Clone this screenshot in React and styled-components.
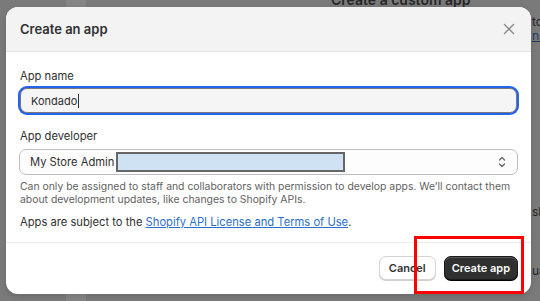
import styled, { createGlobalStyle } from "styled-components";

const GlobalStyle = createGlobalStyle`
  html, body {
    margin: 0;
    padding: 0;
    background: #7a7a7a;
  }
  body {
    font-family: Inter, "Noto Sans", sans-serif;
    -webkit-font-smoothing: antialiased;
  }
`;

const Screen = styled.div`
  position: relative;
  width: 540px;
  height: 301px;
  overflow: hidden;
  background: #7a7a7a;
`;

const PageBehind = styled.div`
  display: grid;
  grid-template-columns: 66px 20px 1fr;
  height: 100%;
`;

const SideStrip = styled.div`
  grid-column: 2;
  background: #858585;
`;

const BehindMain = styled.div`
  grid-column: 3;
  position: relative;
`;

const BehindTitle = styled.div`
  position: absolute;
  left: 245px;
  top: -9px;
  font-size: 14px;
  font-weight: 600;
  color: #262626;
  white-space: nowrap;
`;

const BehindWord = styled.span`
  position: absolute;
  left: 446px;
  top: ${({ $top }) => $top}px;
  font-size: 12px;
  text-decoration: ${({ $link }) => ($link ? "underline" : "none")};
  color: ${({ $link }) => ($link ? "#1f3a66" : "#262626")};
`;

const Modal = styled.div`
  position: absolute;
  left: 6px;
  top: 7px;
  width: 525px;
  height: 287px;
  background: #fff;
  border-radius: 12px;
  overflow: hidden;
  display: flex;
  flex-direction: column;
  box-shadow: 0 2px 6px rgba(0, 0, 0, 0.15);
`;

const Header = styled.div`
  height: 45px;
  box-sizing: border-box;
  display: flex;
  align-items: center;
  justify-content: space-between;
  padding: 0 16px 0 14px;
  background: #f3f3f3;
  border-bottom: 1px solid #e4e4e4;
`;

const Title = styled.h2`
  margin: 0;
  font-size: 13px;
  font-weight: 600;
  color: #303030;
`;

const CloseButton = styled.button`
  border: 0;
  background: none;
  padding: 0;
  display: flex;
  color: #8a8a8a;
`;

const Body = styled.div`
  padding: 17px 13px 0 13px;
  display: flex;
  flex-direction: column;
  flex: 1;
`;

const Field = styled.div`
  display: flex;
  flex-direction: column;
  gap: ${({ $gap }) => $gap}px;
  margin-bottom: ${({ $mb }) => $mb}px;
`;

const Label = styled.label`
  font-size: 11.2px;
  color: #303030;
  padding-left: 1px;
  line-height: 14px;
`;

const TextInput = styled.div`
  height: 25px;
  box-sizing: border-box;
  margin: 2px 1px;
  border: 1px solid #7a7a7a;
  border-radius: 7px;
  background: #f5f5f5;
  box-shadow: 0 0 0 2px #2463eb;
  display: flex;
  align-items: center;
  padding-left: 10px;
  font-size: 11px;
  color: #303030;
`;

const Caret = styled.span`
  display: inline-block;
  width: 1px;
  height: 14px;
  background: #303030;
  margin-left: 1px;
`;

const Select = styled.div`
  height: 26px;
  box-sizing: border-box;
  border: 1px solid #bdbdbd;
  border-radius: 7px;
  background: #fdfdfd;
  display: flex;
  align-items: center;
  padding: 0 10px 0 10px;
  font-size: 11.2px;
  color: #303030;
`;

const Redacted = styled.span`
  width: 229px;
  height: 20px;
  box-sizing: border-box;
  margin-left: 2px;
  background: #cfe2f3;
  border: 2px solid #666;
`;

const Chevrons = styled.span`
  margin-left: auto;
  display: flex;
  color: #616161;
`;

const Help = styled.p`
  margin: 5px 0 0 1px;
  font-size: 10.4px;
  line-height: 13px;
  color: #616161;
`;

const Terms = styled.p`
  margin: 9px 0 0 1px;
  font-size: 11.2px;
  line-height: 14px;
  color: #303030;
`;

const Link = styled.a`
  color: #2c6ecb;
  text-decoration: underline;
`;

const Footer = styled.div`
  height: 52px;
  box-sizing: border-box;
  border-top: 1px solid #ebebeb;
  display: flex;
  align-items: center;
  justify-content: flex-end;
  gap: 8px;
  padding: 0 13px 2px 0;
`;

const Button = styled.button`
  height: 24px;
  box-sizing: border-box;
  padding: 0 ${({ $primary }) => ($primary ? 7 : 9)}px;
  border-radius: 7px;
  font-family: Inter, "Noto Sans", sans-serif;
  font-size: 11px;
  font-weight: 600;
  border: 1px solid ${({ $primary }) => ($primary ? "#1a1a1a" : "#d4d4d4")};
  background: ${({ $primary }) => ($primary ? "#303030" : "#fff")};
  color: ${({ $primary }) => ($primary ? "#fff" : "#303030")};
  box-shadow: ${({ $primary }) =>
    $primary
      ? "inset 0 1px 0 rgba(255,255,255,0.2), 0 1px 0 #000"
      : "0 1px 0 #d0d0d0"};
`;

const Highlight = styled.div`
  position: absolute;
  left: 414px;
  top: 236px;
  width: 110px;
  height: 58px;
  box-sizing: border-box;
  border: 3.5px solid #ff0000;
  pointer-events: none;
`;

export default function App() {
  return (
    <>
      <GlobalStyle />
      <Screen>
        <PageBehind>
          <SideStrip />
          <BehindMain>
            <BehindTitle>Create a custom app</BehindTitle>
            <BehindWord $top={14}>to</BehindWord>
            <BehindWord $top={28} $link>ns</BehindWord>
            <BehindWord $top={204}>sh</BehindWord>
            <BehindWord $top={263}>ua</BehindWord>
          </BehindMain>
        </PageBehind>

        <Modal>
          <Header>
            <Title>Create an app</Title>
            <CloseButton aria-label="Close">
              <svg width="12" height="12" viewBox="0 0 12 12">
                <path d="M1.5 1.5 10.5 10.5M10.5 1.5 1.5 10.5" stroke="currentColor" strokeWidth="1.4" strokeLinecap="round" />
              </svg>
            </CloseButton>
          </Header>

          <Body>
            <Field $gap={3} $mb={14}>
              <Label>App name</Label>
              <TextInput>
                Kondado<Caret />
              </TextInput>
            </Field>

            <Field $gap={6} $mb={0}>
              <Label>App developer</Label>
              <Select>
                My Store Admin
                <Redacted />
                <Chevrons>
                  <svg width="10" height="14" viewBox="0 0 10 14">
                    <path d="M2.5 5 5 2.5 7.5 5M2.5 9 5 11.5 7.5 9" fill="none" stroke="currentColor" strokeWidth="1.2" strokeLinecap="round" strokeLinejoin="round" />
                  </svg>
                </Chevrons>
              </Select>
            </Field>
            <Help>
              Can only be assigned to staff and collaborators with permission to develop apps. We’ll contact them
              about development updates, like changes to Shopify APIs.
            </Help>
            <Terms>
              Apps are subject to the <Link href="#">Shopify API License and Terms of Use</Link>.
            </Terms>
          </Body>

          <Footer>
            <Button>Cancel</Button>
            <Button $primary>Create app</Button>
          </Footer>
        </Modal>

        <Highlight />
      </Screen>
    </>
  );
}
